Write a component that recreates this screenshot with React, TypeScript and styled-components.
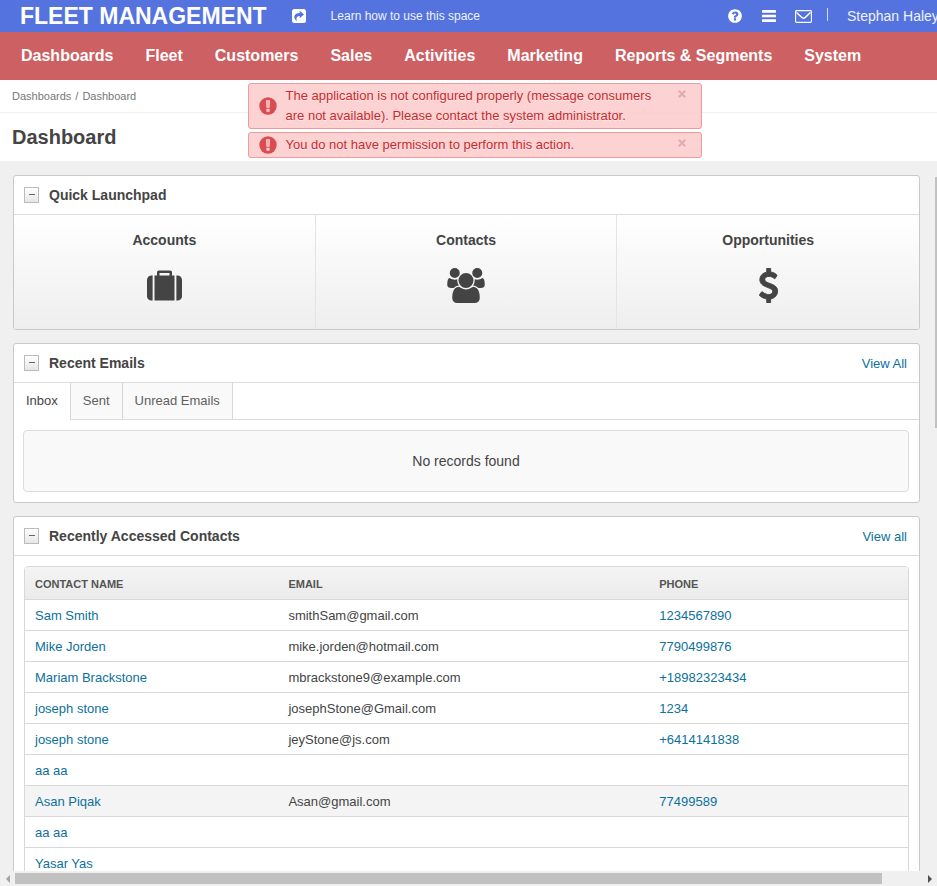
import React from "react";
import styled, { createGlobalStyle } from "styled-components";

const GlobalStyle = createGlobalStyle`
  *, *::before, *::after { box-sizing: border-box; }
  body {
    margin: 0;
    background: #f0f0f0;
    color: #444;
    font: 13px/20px "Liberation Sans", Arial, sans-serif;
  }
  button { font: inherit; color: inherit; padding: 0; border: 0; background: none; cursor: pointer; }
  a { color: #0c719c; text-decoration: none; }
  h1, h2, h3, p { margin: 0; }
`;

const Page = styled.div`
  position: relative;
  display: flex;
  flex-direction: column;
  height: 100vh;
  overflow: hidden;
`;

const TopBar = styled.header`
  display: flex;
  align-items: center;
  flex: none;
  height: 32px;
  padding-left: 20px;
  overflow: hidden;
  background: #5473df;
  color: #fff;
  white-space: nowrap;
`;

const Brand = styled.a`
  font-size: 23px;
  font-weight: bold;
  line-height: 32px;
  color: #fff;
`;

const ShareButton = styled.button`
  display: flex;
  margin: 0 25px;
  color: #fff;
`;

const LearnLink = styled.a`
  font-size: 12px;
  color: #eef2ff;
`;

const Tools = styled.div`
  display: flex;
  align-items: center;
  margin-left: auto;
`;

const ToolButton = styled.button`
  display: flex;
  justify-content: center;
  width: 34px;
  color: #fff;
`;

const ToolDivider = styled.span`
  width: 1px;
  height: 13px;
  margin: 0 19px 4px 7px;
  background: #d5dcf7;
`;

const UserName = styled.button`
  width: 90px;
  overflow: hidden;
  font-size: 14px;
  text-align: left;
  color: #eef2ff;
`;

const MainNav = styled.nav`
  display: flex;
  flex: none;
  gap: 32px;
  height: 48px;
  padding: 0 21px;
  background: #cd6062;
`;

const NavLink = styled.a`
  color: #fff;
  font-size: 16px;
  font-weight: bold;
  line-height: 48px;
  white-space: nowrap;
`;

const Breadcrumbs = styled.nav`
  display: flex;
  flex: none;
  gap: 4px;
  height: 33px;
  padding: 0 12px;
  border-bottom: 1px solid #f0f0f0;
  background: #fff;
  color: #777;
  font-size: 11px;
  line-height: 32px;
`;

const Crumb = styled.a`
  color: #777;
`;

const TitleBar = styled.div`
  flex: none;
  height: 48px;
  padding: 0 12px;
  background: #fff;
`;

const PageTitle = styled.h1`
  font-size: 20px;
  line-height: 48px;
`;

const Alerts = styled.div`
  position: absolute;
  top: 83px;
  left: 50%;
  display: flex;
  flex-direction: column;
  gap: 3px;
  width: 454px;
  margin-left: -221px;
`;

const AlertBox = styled.div`
  display: flex;
  align-items: center;
  padding: 2px 13px 2px 10px;
  border: 1px solid #ee9b9e;
  border-radius: 3px;
  background: rgba(252, 200, 200, 0.82);
  color: #c9292d;
  text-shadow: 0 1px 0 rgba(255, 255, 255, 0.5);
`;

const AlertText = styled.p`
  flex: 1;
  padding: 0 12px 0 9px;
`;

const CloseButton = styled.button`
  display: flex;
  align-self: flex-start;
  justify-content: center;
  width: 12px;
  padding-top: 4px;
  color: #e3abae;
`;

const Scroller = styled.main`
  flex: 1;
  min-height: 0;
  overflow-y: auto;
  scrollbar-width: none;
`;

const Widgets = styled.div`
  display: flex;
  flex-direction: column;
  gap: 13px;
  padding: 14px 17px 14px 13px;
`;

const Panel = styled.section`
  border: 1px solid #c9c9c9;
  border-radius: 3px;
  overflow: hidden;
  background: #fff;
`;

const PanelHead = styled.div`
  display: flex;
  align-items: center;
  height: 39px;
  padding: 0 12px 0 10px;
  border-bottom: 1px solid #dcdcdc;
`;

const CollapseButton = styled.button`
  display: flex;
  align-items: center;
  justify-content: center;
  width: 15px;
  height: 16px;
  margin-right: 10px;
  border: 1px solid #bbb;
  background: linear-gradient(#fff, #e6e6e6);
`;

const Minus = styled.span`
  width: 6px;
  height: 1px;
  margin-bottom: 1px;
  background: #666;
`;

const PanelTitle = styled.h2`
  flex: 1;
  font-size: 14px;
`;

const PanelLink = styled.a`
  padding-top: 2px;
`;

const Launchpad = styled.div`
  display: grid;
  grid-template-columns: repeat(3, 1fr);
  height: 114px;
  background: linear-gradient(#fff, #eee);
`;

const LaunchLink = styled.a`
  display: flex;
  flex-direction: column;
  align-items: center;
  gap: 18px;
  padding-top: 15px;
  border-right: 1px solid #e4e4e4;
  color: #444;
  font-size: 14px;
  font-weight: bold;
  &:last-child { border-right: 0; }
`;

const Tabs = styled.div`
  display: flex;
  height: 37px;
  border-bottom: 1px solid #dcdcdc;
`;

const Tab = styled.button<{ $active?: boolean }>`
  height: ${(p) => (p.$active ? 37 : 36)}px;
  padding: 0 12px ${(p) => (p.$active ? 1 : 0)}px;
  border-right: 1px solid #d6d6d6;
  background: ${(p) => (p.$active ? "#fff" : "#f9f9f9")};
  color: ${(p) => (p.$active ? "#444" : "#5f5f5f")};
`;

const Empty = styled.p`
  margin: 10px 10px 10px 9px;
  border: 1px solid #dcdcdc;
  border-radius: 4px;
  background: #f9f9f9;
  font-size: 14px;
  line-height: 60px;
  text-align: center;
`;

const TableFrame = styled.div`
  margin: 10px;
  border: 1px solid #d8d8d8;
  border-radius: 4px;
  overflow: hidden;
`;

const Table = styled.table`
  width: 100%;
  table-layout: fixed;
  border-spacing: 0;
`;

const HeadCell = styled.th<{ $width: string }>`
  width: ${(p) => p.$width};
  height: 33px;
  padding: 2px 10px 0;
  border-bottom: 1px solid #d8d8d8;
  background: linear-gradient(#f4f4f4, #ebebeb);
  color: #555;
  font-size: 11px;
  text-align: left;
  text-transform: uppercase;
`;

const Row = styled.tr<{ $active?: boolean }>`
  background: ${(p) => (p.$active ? "#f4f4f4" : "#fff")};
`;

const Cell = styled.td`
  height: 31px;
  padding: 1px 10px 0;
  border-bottom: 1px solid #d8d8d8;
`;

const SideThumb = styled.div`
  position: absolute;
  top: 177px;
  right: 0;
  width: 2px;
  height: 251px;
  background: #c1c1c1;
`;

const BottomScroll = styled.div`
  display: flex;
  align-items: center;
  flex: none;
  height: 15px;
  background: #f0f0f0;
`;

const ScrollArrow = styled.button<{ $dim?: boolean }>`
  display: flex;
  justify-content: center;
  width: 15px;
  color: ${(p) => (p.$dim ? "#a3a3a3" : "#505050")};
`;

const ScrollTrack = styled.div`
  flex: 1;
`;

const ScrollThumb = styled.div`
  width: 95.6%;
  height: 11px;
  background: #c1c1c1;
`;

const paths = {
  help:
    "M1024 1376v-192q0-14-9-23t-23-9h-192q-14 0-23 9t-9 23v192q0 14 9 23t23 9h192q14 0 23-9t9-23zm256-672q0-88-55.5-163t-138.5-116-170-41q-243 0-371 213-15 24 8 42l132 100q7 6 19 6 16 0 25-12 53-68 86-92 34-24 86-24 48 0 85.5 26t37.5 59q0 38-20 61t-68 45q-63 28-115.5 86.5t-52.5 125.5v36q0 14 9 23t23 9h192q14 0 23-9t9-23q0-19 21.5-49.5t54.5-49.5q32-18 49-28.5t46-35 44.5-48 28-60.5 12.5-81zm384 192q0 209-103 385.5t-279.5 279.5-385.5 103-385.5-103-279.5-279.5-103-385.5 103-385.5 279.5-279.5 385.5-103 385.5 103 279.5 279.5 103 385.5z",
  suitcase:
    "M640 384h512v-128h-512v128zm-352 0v1280h-64q-92 0-158-66t-66-158v-832q0-92 66-158t158-66h64zm1120 0v1280h-1024v-1280h128v-160q0-40 28-68t68-28h576q40 0 68 28t28 68v160h128zm384 224v832q0 92-66 158t-158 66h-64v-1280h64q92 0 158 66t66 158z",
  group:
    "M593 896q-162 5-265 128h-134q-82 0-138-40.5t-56-118.5q0-353 124-353 6 0 43.5 21t97.5 42.5 119 21.5q67 0 133-23-5 37-5 66 0 139 81 256zm1071 637q0 120-73 189.5t-194 69.5h-874q-121 0-194-69.5t-73-189.5q0-53 3.5-103.5t14-109 26.5-108.5 43-97.5 62-81 85.5-53.5 111.5-20q10 0 43 21.5t73 48 107 48 135 21.5 135-21.5 107-48 73-48 43-21.5q61 0 111.5 20t85.5 53.5 62 81 43 97.5 26.5 108.5 14 109 3.5 103.5zm-1024-1277q0 106-75 181t-181 75-181-75-75-181 75-181 181-75 181 75 75 181zm704 384q0 159-112.5 271.5t-271.5 112.5-271.5-112.5-112.5-271.5 112.5-271.5 271.5-112.5 271.5 112.5 112.5 271.5zm576 225q0 78-56 118.5t-138 40.5h-134q-103-123-265-128 81-117 81-256 0-29-5-66 66 23 133 23 59 0 119-21.5t97.5-42.5 43.5-21q124 0 124 353zm-128-609q0 106-75 181t-181 75-181-75-75-181 75-181 181-75 181 75 75 181z",
  dollar:
    "M1362 1185q0 153-99.5 263.5t-258.5 136.5v175q0 14-9 23t-23 9h-135q-13 0-22.5-9.5t-9.5-22.5v-175q-66-9-127.5-31t-101.5-44.5-74-48-46.5-37.5-17.5-18q-17-21-2-41l103-135q7-10 23-12 15-2 24 9l2 2q113 99 243 125 37 8 74 8 81 0 142.5-43t61.5-122q0-28-15-53t-33.5-42-58.5-37.5-66-32-80-32.5q-39-16-61.5-25t-61.5-26.5-62.5-31-56.5-35.5-53.5-42.5-43.5-49-35.5-58-21-66.5-8.5-78q0-138 98-242t255-134v-180q0-13 9.5-22.5t22.5-9.5h135q14 0 23 9t9 23v176q57 6 110.5 23t87 33.5 63.5 37.5 39 29 15 14q17 18 5 38l-81 146q-8 15-23 16-14 3-27-7-3-3-14.5-12t-39-26.5-58.5-32-74.5-26-85.5-11.5q-95 0-155 43t-60 111q0 26 8.5 48t29.5 41.5 39.5 33 56 31 60.5 27 70 27.5q53 20 81 31.5t76 35 75.5 42.5 62 50 53 63.5 31.5 76.5 13 94z",
};

type IconProps = { name: keyof typeof paths; size: number; wide?: boolean; heavy?: boolean };

const Icon = ({ name, size, wide, heavy }: IconProps) => (
  <svg
    width={wide ? Math.round((size * 15) / 14) : size}
    height={size}
    viewBox={wide ? "0 0 1920 1792" : "0 0 1792 1792"}
    fill="currentColor"
    stroke={heavy ? "currentColor" : "none"}
    strokeWidth={50}
    aria-hidden="true"
  >
    <path d={paths[name]} />
  </svg>
);

const ShareIcon = () => (
  <svg width="14" height="14" viewBox="0 0 14 14" aria-hidden="true">
    <rect width="14" height="14" rx="2.500" fill="currentColor" />
    <path
      d="M7.700 1.800 12 5.500 7.700 9.200V7.100C5.200 7.100 4 8.500 4.700 12.200 2.600 10.500 2 8.700 2.400 7.100 3 4.800 5 3.900 7.700 3.900z"
      fill="#5473df"
    />
  </svg>
);

const BarsIcon = () => (
  <svg width="14" height="13" viewBox="0 0 14 13" fill="currentColor" aria-hidden="true">
    <rect width="14" height="2.600" rx=".5" y=".1" />
    <rect width="14" height="2.600" rx=".5" y="4.700" />
    <rect width="14" height="2.600" rx=".5" y="9.300" />
  </svg>
);

const MailIcon = () => (
  <svg width="17" height="13" viewBox="0 0 17 13" fill="none" stroke="currentColor" aria-hidden="true">
    <rect x=".6" y=".6" width="15.800" height="11.800" rx=".8" strokeWidth="1.100" />
    <path d="M1.500 2.500 7 7.600q1.500 1.200 3 0l5.500-5.100" strokeWidth="1.400" />
  </svg>
);

const AlertIcon = () => (
  <svg width="18" height="18" viewBox="0 0 18 18" aria-hidden="true">
    <circle cx="9" cy="9" r="8.700" fill="#d94c4f" />
    <path d="M7 3.200h4l-.4 7.500H7.400zM7.400 11.800h3.200v3H7.400z" fill="#fad0d0" />
    <path d="M8.300 4.300h1.400l-.2 5.400h-1z" fill="#eb9b9c" />
  </svg>
);

const CloseIcon = () => (
  <svg width="8" height="8" viewBox="0 0 8 8" fill="none" stroke="currentColor" strokeWidth="2" aria-hidden="true">
    <path d="M.8.8l6.400 6.400M7.200.8.8 7.200" />
  </svg>
);

const navItems = ["Dashboards", "Fleet", "Customers", "Sales", "Activities", "Marketing", "Reports & Segments", "System"];

const alerts = [
  "The application is not configured properly (message consumers are not available). Please contact the system administrator.",
  "You do not have permission to perform this action.",
];

const contacts = [
  { name: "Sam Smith", email: "smithSam@gmail.com", phone: "1234567890" },
  { name: "Mike Jorden", email: "mike.jorden@hotmail.com", phone: "7790499876" },
  { name: "Mariam Brackstone", email: "mbrackstone9@example.com", phone: "+18982323434" },
  { name: "joseph stone", email: "josephStone@Gmail.com", phone: "1234" },
  { name: "joseph stone", email: "jeyStone@js.com", phone: "+6414141838" },
  { name: "aa aa", email: "", phone: "" },
  { name: "Asan Piqak", email: "Asan@gmail.com", phone: "77499589", active: true },
  { name: "aa aa", email: "", phone: "" },
  { name: "Yasar Yas", email: "", phone: "" },
];

type WidgetProps = { title: string; link?: string; children: React.ReactNode };

const Widget = ({ title, link, children }: WidgetProps) => (
  <Panel>
    <PanelHead>
      <CollapseButton aria-label={`Collapse ${title}`}>
        <Minus />
      </CollapseButton>
      <PanelTitle>{title}</PanelTitle>
      {link && <PanelLink href="#all">{link}</PanelLink>}
    </PanelHead>
    {children}
  </Panel>
);

export default function App() {
  return (
    <Page>
      <GlobalStyle />
      <TopBar>
        <Brand href="#home">FLEET MANAGEMENT</Brand>
        <ShareButton aria-label="Shortcuts">
          <ShareIcon />
        </ShareButton>
        <LearnLink href="#learn">Learn how to use this space</LearnLink>
        <Tools>
          <ToolButton aria-label="Help">
            <Icon name="help" size={16} />
          </ToolButton>
          <ToolButton aria-label="Menu">
            <BarsIcon />
          </ToolButton>
          <ToolButton aria-label="Emails">
            <MailIcon />
          </ToolButton>
          <ToolDivider />
          <UserName>Stephan Haley</UserName>
        </Tools>
      </TopBar>
      <MainNav aria-label="Main">
        {navItems.map((item) => (
          <NavLink key={item} href="#nav">
            {item}
          </NavLink>
        ))}
      </MainNav>
      <Breadcrumbs aria-label="Breadcrumb">
        <Crumb href="#dashboards">Dashboards</Crumb>
        <span>/</span>
        <Crumb href="#dashboard">Dashboard</Crumb>
      </Breadcrumbs>
      <TitleBar>
        <PageTitle>Dashboard</PageTitle>
      </TitleBar>
      <Scroller>
        <Widgets>
          <Widget title="Quick Launchpad">
            <Launchpad>
              <LaunchLink href="#accounts">
                Accounts
                <Icon name="suitcase" size={35} />
              </LaunchLink>
              <LaunchLink href="#contacts">
                Contacts
                <Icon name="group" size={35} wide />
              </LaunchLink>
              <LaunchLink href="#opportunities">
                Opportunities
                <Icon name="dollar" size={35} heavy />
              </LaunchLink>
            </Launchpad>
          </Widget>
          <Widget title="Recent Emails" link="View All">
            <Tabs role="tablist">
              <Tab role="tab" aria-selected $active>
                Inbox
              </Tab>
              <Tab role="tab">Sent</Tab>
              <Tab role="tab">Unread Emails</Tab>
            </Tabs>
            <Empty>No records found</Empty>
          </Widget>
          <Widget title="Recently Accessed Contacts" link="View all">
            <TableFrame>
              <Table>
                <thead>
                  <tr>
                    <HeadCell $width="28.7%">Contact Name</HeadCell>
                    <HeadCell $width="42%">Email</HeadCell>
                    <HeadCell $width="29.3%">Phone</HeadCell>
                  </tr>
                </thead>
                <tbody>
                  {contacts.map((c, i) => (
                    <Row key={i} $active={c.active}>
                      <Cell>
                        <a href="#contact">{c.name}</a>
                      </Cell>
                      <Cell>{c.email}</Cell>
                      <Cell>{c.phone && <a href={`tel:${c.phone}`}>{c.phone}</a>}</Cell>
                    </Row>
                  ))}
                </tbody>
              </Table>
            </TableFrame>
          </Widget>
        </Widgets>
      </Scroller>
      <BottomScroll>
        <ScrollArrow $dim aria-label="Scroll left">
          <svg width="4" height="8" viewBox="0 0 4 8" fill="currentColor">
            <path d="M4 0v8L0 4z" />
          </svg>
        </ScrollArrow>
        <ScrollTrack>
          <ScrollThumb />
        </ScrollTrack>
        <ScrollArrow aria-label="Scroll right">
          <svg width="4" height="8" viewBox="0 0 4 8" fill="currentColor">
            <path d="M0 0v8l4-4z" />
          </svg>
        </ScrollArrow>
      </BottomScroll>
      <Alerts>
        {alerts.map((text) => (
          <AlertBox key={text} role="alert">
            <AlertIcon />
            <AlertText>{text}</AlertText>
            <CloseButton aria-label="Close">
              <CloseIcon />
            </CloseButton>
          </AlertBox>
        ))}
      </Alerts>
      <SideThumb />
    </Page>
  );
}
